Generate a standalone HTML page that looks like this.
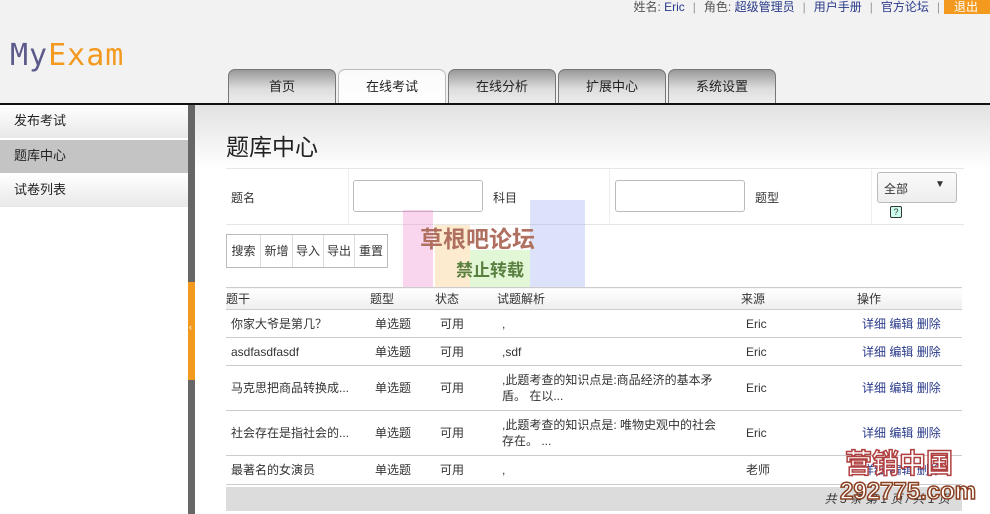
<!DOCTYPE html>
<html><head><meta charset="utf-8"><style>
*{margin:0;padding:0;box-sizing:border-box}
body{width:990px;height:514px;overflow:hidden;background:#fff;font-family:"Liberation Sans","Noto Sans CJK SC",sans-serif;font-size:12px;color:#333;position:relative}
.top{position:absolute;left:0;top:0;width:990px;height:104px;background:#f2f2f2}
.line{position:absolute;left:0;top:103px;width:990px;height:2px;background:#111}
.logo{position:absolute;left:10px;top:38px;font-family:"DejaVu Sans Mono","Liberation Mono",monospace;font-size:30px;letter-spacing:1px}
.info{position:absolute;top:0;right:0;height:14px;font-size:12px;color:#555;line-height:14px}
.info a{color:#2a3a8a;text-decoration:none}
.info .sep{color:#999;margin:0 8px}
.out{display:inline-block;background:#f39a1e;color:#fff;padding:0 10px 0 10px;width:46px}
.tab{position:absolute;top:69px;width:108px;height:35px;border:1px solid #777;border-bottom:none;border-radius:7px 7px 0 0;background:linear-gradient(#999,#ddd 55%,#eee);text-align:center;line-height:34px;font-size:13px;color:#222}
.tab.on{background:linear-gradient(#fafafa,#fff);border-color:#bbb;height:36px}
.side{position:absolute;left:0;width:188px;height:33px;line-height:31px;padding-left:14px;font-size:13px;background:linear-gradient(#fff,#e8e8e8);color:#222}
.side.on{background:#c4c4c4}
.bar{position:absolute;left:188px;top:105px;width:7px;height:409px;background:#666}
.bar2{position:absolute;left:188px;top:282px;width:7px;height:98px;background:#f39a1e}
.main{position:absolute;left:195px;top:105px;width:795px;height:65px;background:linear-gradient(#e2e2e2,#fff)}
h1{position:absolute;left:226px;top:128px;font-size:23px;font-weight:normal;color:#222}
.abs{position:absolute}
.inp{position:absolute;height:32px;border:1px solid #bbb;border-radius:3px;background:#fff}
.btns{position:absolute;left:226px;top:234px;height:34px;border:1px solid #bbb;display:flex;background:#fff}
.btns span{width:28px;border-right:1px solid #ddd;text-align:center;line-height:32px;font-size:12px}
table{position:absolute;left:226px;top:287px;width:736px;border-collapse:collapse;font-size:12px;table-layout:fixed}
th{height:22px;text-align:left;font-weight:normal;background:linear-gradient(#fff,#eee);border:1px solid #ccc;border-left:none;border-right:none}
td{padding-left:5px;border-bottom:1px solid #ccc;color:#333;line-height:16px}
td.an{padding-right:20px}
td a{color:#2a3a8a}
.foot{position:absolute;left:226px;top:487px;width:736px;height:24px;background:#dcdcdc;text-align:right;padding-right:12px;line-height:24px;font-style:italic}
</style></head><body>
<div class="top"></div>
<div class="logo"><span style="color:#5c5a8a">My</span><span style="color:#f39a1e">Exam</span></div>
<div class="info">姓名: <a>Eric</a><span class="sep">|</span>角色: <a>超级管理员</a><span class="sep">|</span><a>用户手册</a><span class="sep">|</span><a>官方论坛</a><span class="sep" style="margin-right:4px">|</span><span class="out">退出</span></div>
<div class="tab" style="left:228px">首页</div>
<div class="tab on" style="left:338px">在线考试</div>
<div class="tab" style="left:448px">在线分析</div>
<div class="tab" style="left:558px">扩展中心</div>
<div class="tab" style="left:668px">系统设置</div>
<div class="line"></div>
<div class="side" style="top:105px">发布考试</div>
<div class="side on" style="top:140px">题库中心</div>
<div class="side" style="top:174px">试卷列表</div>
<div class="main"></div>
<div class="bar"></div><div class="bar2"></div>
<div class="abs" style="left:189px;top:322px;color:#fff;font-size:9px">‹</div>
<h1>题库中心</h1>
<div class="abs" style="left:226px;top:168px;width:738px;height:1px;background:#e6e6e6"></div>
<div class="abs" style="left:226px;top:224px;width:738px;height:1px;background:#e6e6e6"></div>
<div class="abs" style="left:348px;top:169px;width:1px;height:55px;background:#eee"></div>
<div class="abs" style="left:609px;top:169px;width:1px;height:55px;background:#eee"></div>
<div class="abs" style="left:871px;top:169px;width:1px;height:55px;background:#eee"></div>
<div class="abs" style="left:231px;top:189px">题名</div>
<div class="inp" style="left:353px;top:180px;width:130px"></div>
<div class="abs" style="left:493px;top:189px">科目</div>
<div class="inp" style="left:615px;top:180px;width:130px"></div>
<div class="abs" style="left:755px;top:189px">题型</div>
<div class="inp" style="left:877px;top:172px;width:80px;height:31px;background:linear-gradient(#fafafa,#eee)"><span style="position:absolute;left:6px;top:7px">全部</span><span style="position:absolute;left:57px;top:6px;font-size:10px;color:#333">▼</span></div>
<div class="abs" style="left:890px;top:206px;width:12px;height:12px;border:1px solid #333;border-radius:2px;background:#cfe;font-size:9px;line-height:10px;text-align:center">?</div>
<div class="btns"><span style="width:34px">搜索</span><span style="width:32px">新增</span><span style="width:31px">导入</span><span style="width:31px">导出</span><span style="width:32px;border:none">重置</span></div>
<div class="abs" style="left:403px;top:210px;width:30px;height:80px;background:rgba(240,120,200,.3)"></div>
<div class="abs" style="left:435px;top:225px;width:35px;height:70px;background:rgba(250,190,100,.3)"></div>
<div class="abs" style="left:470px;top:250px;width:60px;height:50px;background:rgba(160,230,120,.3)"></div>
<div class="abs" style="left:530px;top:200px;width:55px;height:90px;background:rgba(140,160,240,.3)"></div>
<div class="abs" style="left:420px;top:220px;font-size:23px;color:#b07060;font-weight:bold">草根吧论坛</div>
<div class="abs" style="left:456px;top:256px;font-size:17px;color:#5a8040;font-weight:bold">禁止转载</div>
<table>
<colgroup><col style="width:144px"><col style="width:65px"><col style="width:62px"><col style="width:244px"><col style="width:116px"><col></colgroup>
<tr><th>题干</th><th>题型</th><th>状态</th><th>试题解析</th><th>来源</th><th>操作</th></tr>
<tr style="height:28px"><td>你家大爷是第几？</td><td>单选题</td><td>可用</td><td class="an">,</td><td>Eric</td><td><a>详细</a> <a>编辑</a> <a>删除</a></td></tr>
<tr style="height:28px"><td>asdfasdfasdf</td><td>单选题</td><td>可用</td><td class="an">,sdf</td><td>Eric</td><td><a>详细</a> <a>编辑</a> <a>删除</a></td></tr>
<tr style="height:45px"><td>马克思把商品转换成...</td><td>单选题</td><td>可用</td><td class="an">,此题考查的知识点是:商品经济的基本矛盾。 在以...</td><td>Eric</td><td><a>详细</a> <a>编辑</a> <a>删除</a></td></tr>
<tr style="height:45px"><td>社会存在是指社会的...</td><td>单选题</td><td>可用</td><td class="an">,此题考查的知识点是: 唯物史观中的社会存在。 ...</td><td>Eric</td><td><a>详细</a> <a>编辑</a> <a>删除</a></td></tr>
<tr style="height:29px"><td>最著名的女演员</td><td>单选题</td><td>可用</td><td class="an">,</td><td>老师</td><td><a>详细</a> <a>编辑</a> <a>删除</a></td></tr>
</table>
<div class="foot">共 5 条 第 1 页 / 共 1 页</div>
<div class="abs" style="left:845px;top:442px;font-size:27px;color:#fff;-webkit-text-stroke:1.5px #b04040;font-weight:bold">营销中国</div>
<div class="abs" style="left:840px;top:478px;font-size:24px;color:#fff;-webkit-text-stroke:1.5px #8a4020;font-weight:bold">292775.com</div>
</body></html>
